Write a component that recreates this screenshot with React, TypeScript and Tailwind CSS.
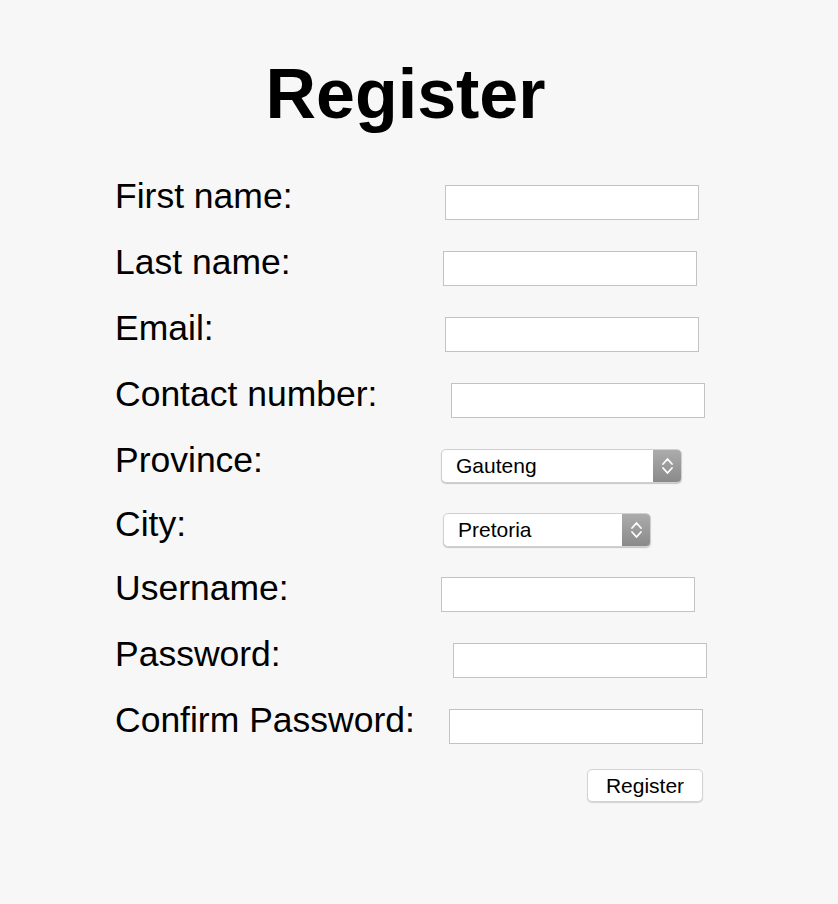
import React from 'react'

const font = { fontFamily: '"Liberation Sans", Arial, sans-serif' }

const Chevrons = () => (
  <svg width="13" height="22" viewBox="0 0 13 22" fill="none" stroke="white" strokeWidth="1.8" strokeLinecap="round" strokeLinejoin="round">
    <path d="M2 9 L6.5 4 L11 9" />
    <path d="M2 13 L6.5 18 L11 13" />
  </svg>
)

const TextBox = ({ className }: { className: string }) => (
  <input type="text" className={`h-[35px] w-[254px] border border-[#c3c3c3] bg-white outline-none ${className}`} />
)

const Select = ({ value, className }: { value: string; className: string }) => (
  <div className={`flex h-[34px] overflow-hidden rounded-[5px] border border-[#d0d0d0] bg-white shadow-[0_1px_1px_rgba(0,0,0,0.2)] ${className}`}>
    <span className="flex-1 pl-[14px] text-[21px] leading-[32px] text-black" style={font}>{value}</span>
    <span className="flex w-[28px] items-center justify-center bg-gradient-to-b from-[#acacac] to-[#8a8a8a]">
      <Chevrons />
    </span>
  </div>
)

const Label = ({ children }: { children: React.ReactNode }) => (
  <div className="w-[326px] shrink-0 text-[35.5px] leading-[40px] text-black" style={font}>{children}</div>
)

export default function App() {
  return (
    <div className="min-h-[904px] w-full bg-[#f7f7f7] pl-[115px]" style={font}>
      <h1 className="w-[581px] pt-[54px] text-center text-[70px] font-bold leading-[80px] text-black">Register</h1>
      <div className="mt-[42px]">
        <div className="flex h-[66px] items-start">
          <Label>First name:</Label>
          <TextBox className="ml-[4px] mt-[9px]" />
        </div>
        <div className="flex h-[66px] items-start">
          <Label>Last name:</Label>
          <TextBox className="ml-[2px] mt-[9px]" />
        </div>
        <div className="flex h-[66px] items-start">
          <Label>Email:</Label>
          <TextBox className="ml-[4px] mt-[9px]" />
        </div>
        <div className="flex h-[66px] items-start">
          <Label>Contact number:</Label>
          <TextBox className="ml-[10px] mt-[9px]" />
        </div>
        <div className="flex h-[64px] items-start">
          <Label>Province:</Label>
          <Select value="Gauteng" className="ml-0 mt-[9px] w-[241px]" />
        </div>
        <div className="flex h-[64px] items-start">
          <Label>City:</Label>
          <Select value="Pretoria" className="ml-[2px] mt-[9px] w-[208px]" />
        </div>
        <div className="flex h-[66px] items-start">
          <Label>Username:</Label>
          <TextBox className="ml-0 mt-[9px]" />
        </div>
        <div className="flex h-[66px] items-start">
          <Label>Password:</Label>
          <TextBox className="ml-[12px] mt-[9px]" />
        </div>
        <div className="flex h-[66px] items-start">
          <Label>Confirm Password:</Label>
          <TextBox className="ml-[8px] mt-[9px]" />
        </div>
        <div className="flex">
          <button className="ml-[472px] mt-[3px] h-[33px] w-[116px] rounded-[5px] border border-[#d3d3d3] bg-white text-[21px] text-black shadow-[0_1px_1px_rgba(0,0,0,0.15)]" style={font}>
            Register
          </button>
        </div>
      </div>
    </div>
  )
}
